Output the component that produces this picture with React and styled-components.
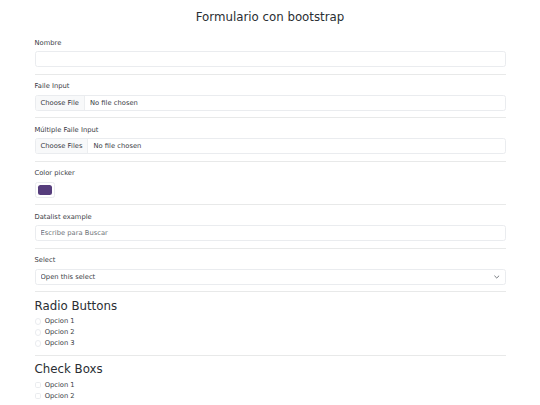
import React from 'react'
import styled, { createGlobalStyle } from 'styled-components'

// Bootstrap 5 form, drawn at the 0.42 scale of the screenshot (1rem = 6.75px)
const GlobalStyle = createGlobalStyle`
  * { box-sizing: border-box; }
  html, body { margin: 0; padding: 0; overflow: hidden; background: #fff; }
  body {
    font-family: "DejaVu Sans", "Liberation Sans", sans-serif;
    font-size: 6.75px;
    line-height: 1.5;
    color: #3b4046;
  }
`

const Container = styled.div`
  width: 471px;
  margin: 0 auto;
`

const Title = styled.h3`
  margin: 9.6px 0 14px;
  font-size: 11.81px;
  font-weight: 500;
  line-height: 1.2;
  text-align: center;
  color: #2a2e33;
`

const SectionTitle = styled.h3`
  margin: 0 0 3.375px;
  font-size: 11.81px;
  font-weight: 500;
  line-height: 1.2;
  color: #2a2e33;
`

const Label = styled.label`
  display: block;
  margin-bottom: 3.375px;
  line-height: 10.125px;
`

const Divider = styled.hr`
  margin: 6.5px 0;
  border: 0;
  border-top: 1px solid rgba(33, 37, 41, 0.1);
`

const Control = styled.input`
  display: block;
  width: ${(p) => (p.$narrow ? '20.25px' : '100%')};
  height: 16px;
  margin: 0;
  padding: ${(p) => (p.$narrow ? '2.2px' : '0 5.06px')};
  font: inherit;
  font-size: 6.75px;
  color: #3b4046;
  background: #fff;
  border: 1px solid #eaecef;
  border-radius: 2.53px;
  outline: none;
  overflow: hidden;

  &::placeholder { color: #70757a; }
  &::-webkit-calendar-picker-indicator { display: none !important; }

  &::file-selector-button {
    height: 100%;
    margin: 0 5.06px 0 -5.06px;
    padding: 0 5.06px;
    font: inherit;
    color: #3b4046;
    background: #f8f9fa;
    border: 0;
    border-right: 1px solid #eceef0;
    border-radius: 0;
  }

  &::-webkit-color-swatch-wrapper { padding: 0; }
  &::-webkit-color-swatch {
    border: 0;
    border-radius: 2.53px;
  }
`

const SelectWrap = styled.div`
  position: relative;
`

const Select = styled.select`
  display: block;
  width: 100%;
  height: 16px;
  padding: 0 15px 0 5.06px;
  font: inherit;
  font-size: 6.75px;
  color: #3b4046;
  background: #fff;
  border: 1px solid #eaecef;
  border-radius: 2.53px;
  appearance: none;
  outline: none;
`

const Chevron = styled.svg`
  position: absolute;
  right: 6px;
  top: 50%;
  width: 5.5px;
  height: 4px;
  transform: translateY(-50%);
  pointer-events: none;
`

const Check = styled.div`
  display: block;
  min-height: 10.125px;
  padding-left: 10.125px;
  margin-bottom: 0.84px;
  line-height: 10.125px;
`

const CheckInput = styled.input`
  float: left;
  width: 6.75px;
  height: 6.75px;
  margin: 1.69px 0 0 -10.125px;
  appearance: none;
  background: #fff;
  border: 1px solid #eaecef;
  border-radius: ${(p) => (p.type === 'radio' ? '50%' : '1.69px')};
  vertical-align: top;
`

const CheckLabel = styled.label`
  color: #3b4046;
`

const Field = ({ label, children }) => (
  <>
    <Label>{label}</Label>
    {children}
    <Divider />
  </>
)

const Option = ({ type, name, text }) => (
  <Check>
    <CheckInput type={type} name={name} />
    <CheckLabel>{text}</CheckLabel>
  </Check>
)

export default function App() {
  return (
    <>
      <GlobalStyle />
      <Container>
        <Title>Formulario con bootstrap</Title>
        <form onSubmit={(e) => e.preventDefault()}>
          <Field label="Nombre">
            <Control type="text" />
          </Field>
          <Field label="Faile Input">
            <Control type="file" />
          </Field>
          <Field label="Múltiple Faile Input">
            <Control type="file" multiple />
          </Field>
          <Field label="Color picker">
            <Control type="color" $narrow defaultValue="#563d7c" />
          </Field>
          <Field label="Datalist example">
            <Control list="opciones" placeholder="Escribe para Buscar" />
            <datalist id="opciones">
              <option value="San Francisco" />
              <option value="New York" />
              <option value="Seattle" />
            </datalist>
          </Field>
          <Field label="Select">
            <SelectWrap>
              <Select defaultValue="">
                <option value="">Open this select</option>
                <option value="1">One</option>
                <option value="2">Two</option>
                <option value="3">Three</option>
              </Select>
              <Chevron viewBox="0 0 16 12" preserveAspectRatio="none">
                <path d="m2 3 6 6 6-6" fill="none" stroke="#555a60" strokeWidth="2.4" strokeLinecap="round" strokeLinejoin="round" />
              </Chevron>
            </SelectWrap>
          </Field>

          <SectionTitle>Radio Buttons</SectionTitle>
          <Option type="radio" name="radio" text="Opcion 1" />
          <Option type="radio" name="radio" text="Opcion 2" />
          <Option type="radio" name="radio" text="Opcion 3" />
          <Divider />

          <SectionTitle>Check Boxs</SectionTitle>
          <Option type="checkbox" name="c1" text="Opcion 1" />
          <Option type="checkbox" name="c2" text="Opcion 2" />
        </form>
      </Container>
    </>
  )
}
